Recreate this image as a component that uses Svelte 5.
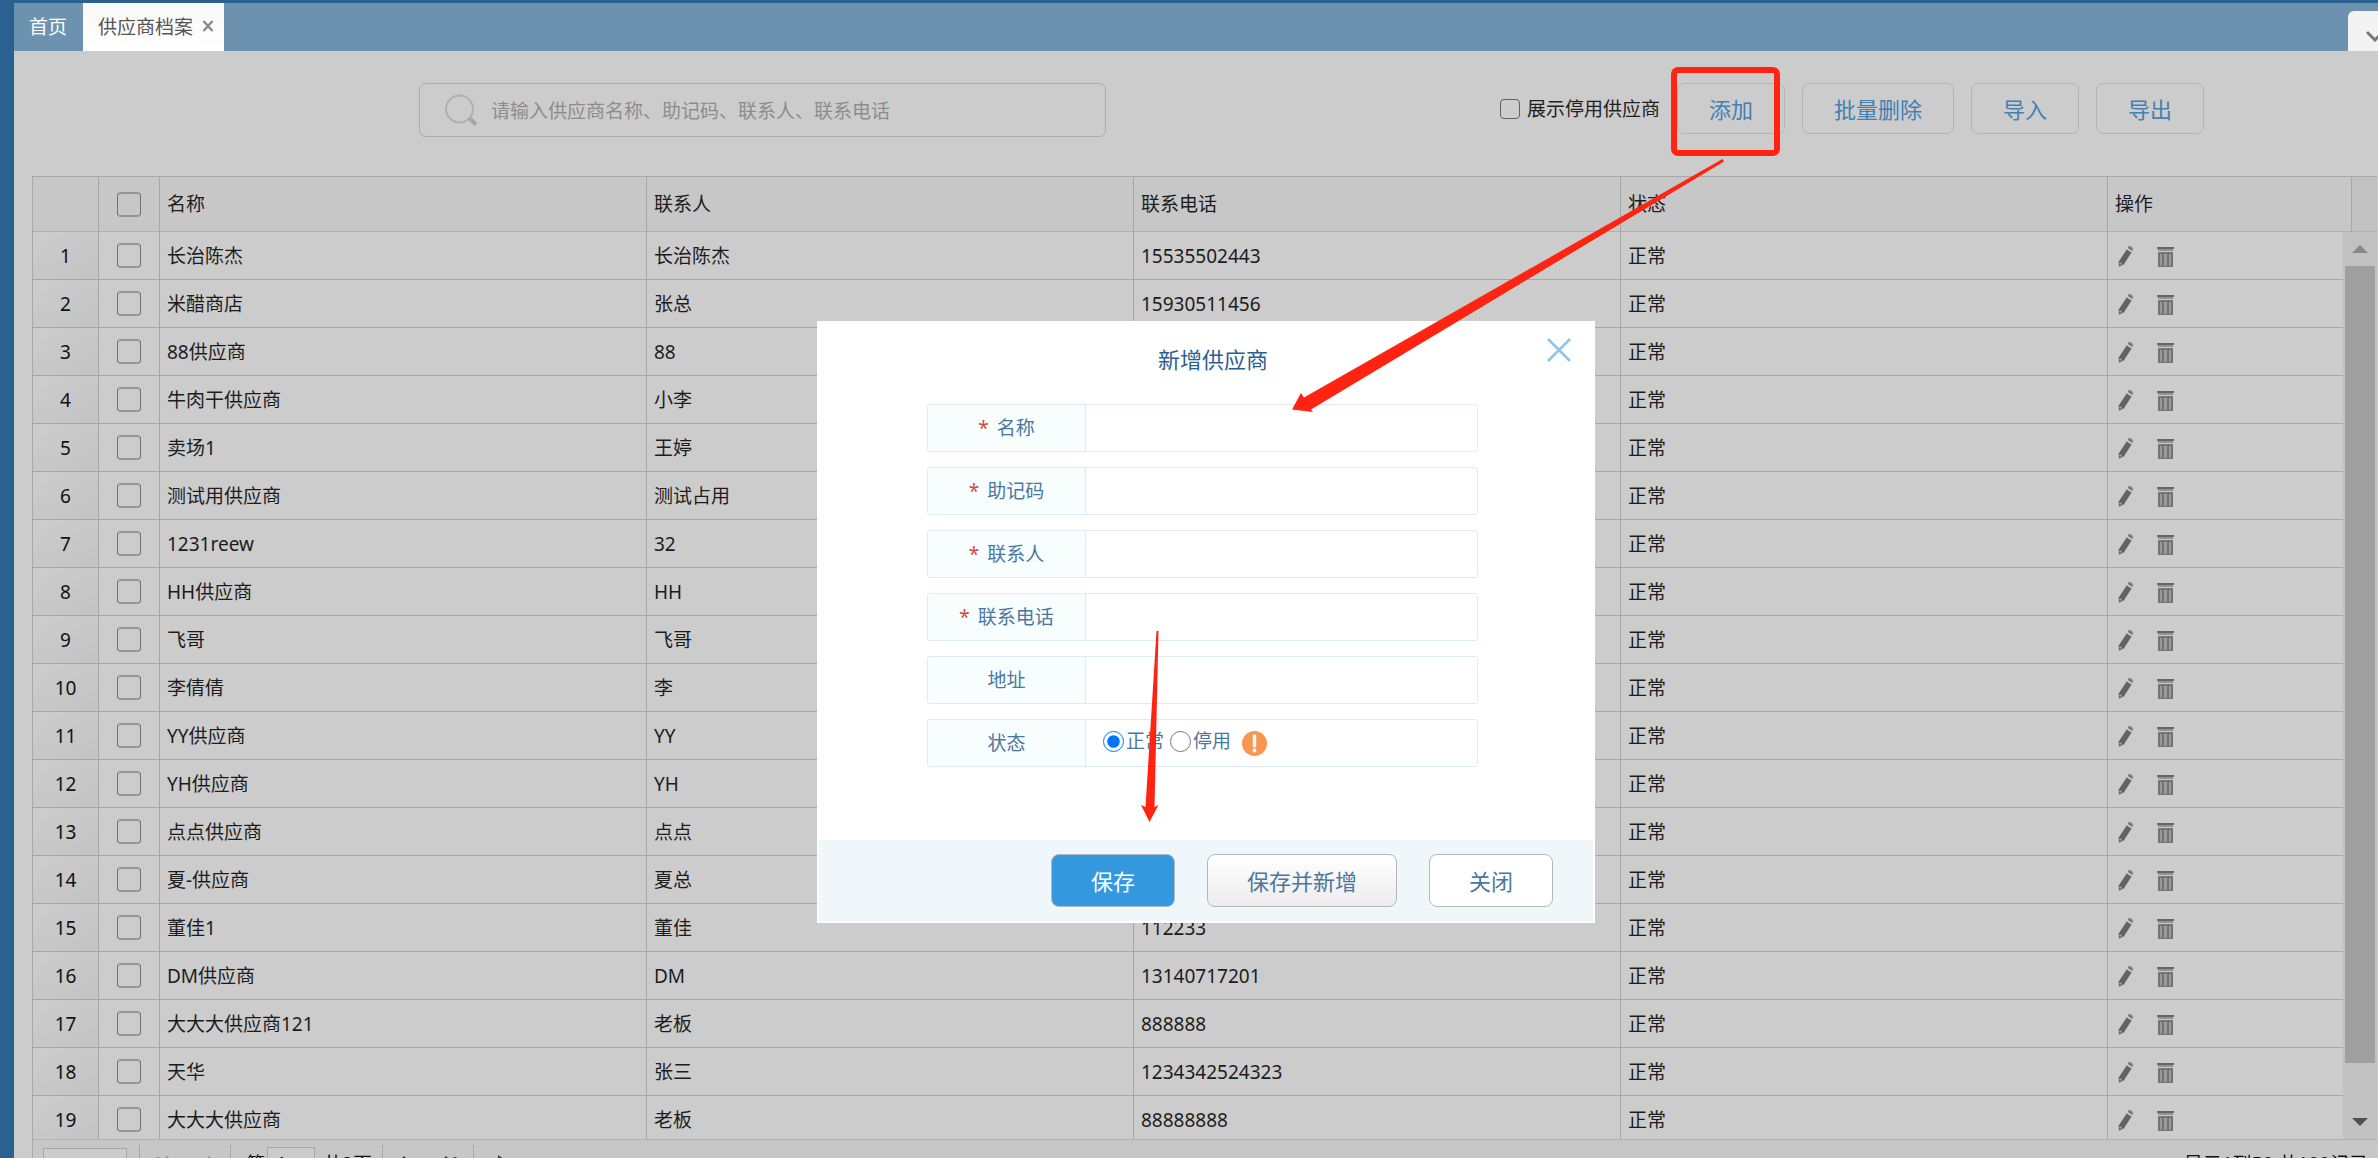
<script>
	const suppliers = [
		['长治陈杰', '长治陈杰', '15535502443'],
		['米醋商店', '张总', '15930511456'],
		['88供应商', '88', ''],
		['牛肉干供应商', '小李', ''],
		['卖场1', '王婷', ''],
		['测试用供应商', '测试占用', ''],
		['1231reew', '32', ''],
		['HH供应商', 'HH', ''],
		['飞哥', '飞哥', ''],
		['李倩倩', '李', ''],
		['YY供应商', 'YY', ''],
		['YH供应商', 'YH', ''],
		['点点供应商', '点点', ''],
		['夏-供应商', '夏总', ''],
		['董佳1', '董佳', '112233'],
		['DM供应商', 'DM', '13140717201'],
		['大大大供应商121', '老板', '888888'],
		['天华', '张三', '1234342524323'],
		['大大大供应商', '老板', '88888888']
	];

	const fields = [
		{ id: 'name', label: '名称', required: true },
		{ id: 'code', label: '助记码', required: true },
		{ id: 'contact', label: '联系人', required: true },
		{ id: 'phone', label: '联系电话', required: true },
		{ id: 'address', label: '地址', required: false }
	];

	let status = $state('normal');
</script>

<div class="shell">
	<nav class="tabs">
		<a class="tab" href="#home">首页</a>
		<div class="tab active">
			<a href="#supplier">供应商档案</a>
			<button class="tab-close" aria-label="关闭标签">
				<svg width="12" height="12" viewBox="0 0 12 12"><path d="M1.5 1L10.5 11M10.5 1L1.5 11" stroke="#888" stroke-width="2.4" /></svg>
			</button>
		</div>
		<button class="tab-more" aria-label="更多">
			<svg width="18" height="12" viewBox="0 0 18 12"><path d="M1 2L9 10L17 2" fill="none" stroke="#777" stroke-width="3" /></svg>
		</button>
	</nav>

	<header class="toolbar">
		<div class="search">
			<svg width="34" height="32" viewBox="0 0 34 32" fill="none" stroke="#b0b0b0">
				<circle cx="15.5" cy="15" r="13.5" stroke-width="2" />
				<path d="M25 24L32 30.5" stroke="#a6a6a6" stroke-width="4" />
			</svg>
			<input type="text" aria-label="搜索" placeholder="请输入供应商名称、助记码、联系人、联系电话" />
		</div>
		<div class="actions">
			<label class="show-disabled"><input type="checkbox" />展示停用供应商</label>
			<button>添加</button>
			<button>批量删除</button>
			<button>导入</button>
			<button>导出</button>
		</div>
	</header>

	<main class="grid">
		<table class="grid-head">
			<colgroup><col class="c-num" /><col class="c-check" /><col /><col /><col /><col /><col class="c-op-head" /><col class="c-fill" /></colgroup>
			<thead>
				<tr>
					<th></th>
					<th class="check"><input type="checkbox" aria-label="全选" /></th>
					<th>名称</th>
					<th>联系人</th>
					<th>联系电话</th>
					<th>状态</th>
					<th>操作</th>
					<th class="fill"></th>
				</tr>
			</thead>
		</table>
		<div class="grid-body">
			<div class="rows">
				<table>
					<colgroup><col class="c-num" /><col class="c-check" /><col /><col /><col /><col /><col class="c-op" /></colgroup>
					<tbody>
						{#each suppliers as [name, contact, phone], i}
							<tr>
								<td class="num">{i + 1}</td>
								<td class="check"><input type="checkbox" aria-label="选择 {name}" /></td>
								<td>{name}</td>
								<td>{contact}</td>
								<td>{phone}</td>
								<td>正常</td>
								<td class="ops">
									<div>
										<button aria-label="编辑">
											<svg width="16" height="22" viewBox="0 0 16 22">
												<path d="M8.6 4.5L13.6 7.4L5.8 19.4L1 21.8L.6 16.8Z" fill="#626262" />
												<path d="M9.8 3L11 .6L15.2 3L14.2 6.2Z" fill="#7c7c7c" />
												<path d="M1.6 18L4 19.4" stroke="#b5b5b5" stroke-width="1.2" />
											</svg>
										</button>
										<button aria-label="删除">
											<svg width="17" height="22" viewBox="0 0 17 22">
												<path d="M0 2H17V4H0Z" fill="#666" />
												<path d="M1 4H16V6H1Z" fill="#929292" />
												<path d="M1 7H16V22H1Z" fill="#9b9b9b" />
												<path d="M2 22V8H15V22M6 8V22M11 8V22" fill="none" stroke="#6a6a6a" stroke-width="1.6" />
												<path d="M1 21.3H16" stroke="#777" stroke-width="1.4" />
											</svg>
										</button>
									</div>
								</td>
							</tr>
						{/each}
					</tbody>
				</table>
			</div>
			<div class="scrollbar">
				<span class="arrow up"></span>
				<div class="track"><div class="thumb"></div></div>
				<span class="arrow down"></span>
			</div>
		</div>
		<footer class="pager">
			<select aria-label="每页条数"><option></option></select>
			<div class="nav-pair">
				<button aria-label="首页"><svg width="14" height="16" viewBox="0 0 14 16" stroke="#909090" fill="none" stroke-width="3"><path d="M2 1V15M12 1L6 8L12 15" /></svg></button>
				<button aria-label="上一页"><svg width="14" height="16" viewBox="0 0 14 16" stroke="#909090" fill="none" stroke-width="3"><path d="M10 1L4 8L10 15" /></svg></button>
			</div>
			<label class="page-no">第<input type="text" value="1" />共2页</label>
			<div class="nav-pair">
				<button aria-label="下一页"><svg width="14" height="16" viewBox="0 0 14 16" stroke="#444" fill="none" stroke-width="3"><path d="M4 1L10 8L4 15" /></svg></button>
				<button aria-label="末页"><svg width="14" height="16" viewBox="0 0 14 16" stroke="#444" fill="none" stroke-width="3"><path d="M2 1L8 8L2 15M12 1V15" /></svg></button>
			</div>
			<button class="reload" aria-label="刷新"><svg width="20" height="20" viewBox="0 0 20 20"><path d="M9 4A7 7 0 1 0 17 11" fill="none" stroke="#4a4242" stroke-width="3" /><path d="M8 0L14 4L8 8Z" fill="#4a4242" /></svg></button>
			<span class="total">显示1到50,共100记录</span>
		</footer>
	</main>
</div>

<div class="overlay">
	<form class="dialog" onsubmit={(e) => e.preventDefault()}>
		<div class="title">
			<h2>新增供应商</h2>
			<button type="button" class="close" aria-label="关闭">
				<svg width="24" height="24" viewBox="0 0 24 24"><path d="M1 1L23 23M23 1L1 23" stroke="#8ec6ec" stroke-width="2.6" /></svg>
			</button>
		</div>
		<div class="fields">
			{#each fields as field}
				<div class="field">
					<label for={field.id}>{#if field.required}<i>*</i>{/if}{field.label}</label>
					<input id={field.id} type="text" />
				</div>
			{/each}
			<div class="field">
				<span class="label">状态</span>
				<div class="radios">
					<label><input type="radio" value="normal" bind:group={status} />正常</label>
					<label><input type="radio" value="disabled" bind:group={status} />停用</label>
					<svg width="25" height="25" viewBox="0 0 25 25"><circle cx="12.5" cy="12.5" r="12.5" fill="#f79752" /><path d="M12.5 5V15" stroke="#fff" stroke-width="3.4" stroke-linecap="round" /><circle cx="12.5" cy="19.5" r="1.9" fill="#fff" /></svg>
				</div>
			</div>
		</div>
		<div class="buttons">
			<button class="primary">保存</button>
			<button class="shaded">保存并新增</button>
			<button type="button">关闭</button>
		</div>
	</form>
</div>

<!-- step marks: button frame and the two arrows -->
<svg class="marks">
	<rect x="1674" y="70" width="103" height="83" rx="4" fill="none" stroke="#ff2312" stroke-width="6" />
	<path d="M1722.500 159L1724 161.500L1311 409.500L1313 412L1292 409.500L1301 393L1304 397.500Z" fill="#ff2312" />
	<path d="M1156.500 631L1158.500 631L1154.500 807L1158.500 805L1149.500 822L1141 805L1145.500 807Z" fill="#ff2312" />
</svg>

<style>
	:global(body) {
		overflow: hidden;
		font-family: "Noto Sans", "Noto Sans CJK SC", sans-serif;
		font-size: 19px;
		line-height: 28px;
	}

	* {
		box-sizing: border-box;
	}

	button,
	input,
	select {
		font: inherit;
		margin: 0;
	}

	button {
		padding: 0;
		border: 0;
		background: none;
		cursor: pointer;
	}

	svg {
		display: block;
	}

	a {
		color: inherit;
		text-decoration: none;
	}

	.shell {
		display: flex;
		flex-direction: column;
		height: 100vh;
		overflow: hidden;
		border-top: 3px solid #2a6191;
		border-left: 14px solid #2a6191;
		background: #ccc;
	}

	/* tabs */
	.tabs {
		display: flex;
		flex: none;
		height: 48px;
		background: #6d92b0;
	}

	.tab {
		display: flex;
		align-items: center;
		padding: 0 16px 0 15px;
		color: #fff;
	}

	.tab.active {
		gap: 9px;
		padding-right: 10px;
		color: #555;
		background: linear-gradient(#f8f8f8, #fff);
	}

	.tab-close {
		padding-bottom: 3px;
	}

	.tab-more {
		width: 30px;
		margin: 8px 0 0 auto;
		padding: 10px 0 0 18px;
		overflow: hidden;
		border-radius: 6px 0 0 0;
		background: #f3f3f3;
	}

	/* toolbar */
	.toolbar {
		display: flex;
		flex: none;
		justify-content: space-between;
		align-items: flex-start;
		height: 125px;
		padding: 32px 174px 0 405px;
	}

	.search {
		display: flex;
		flex: 0 1 687px;
		align-items: center;
		gap: 13px;
		height: 54px;
		padding-left: 24px;
		border: 1px solid #adadad;
		border-radius: 7px;
	}

	.search input {
		flex: 1;
		padding: 2px 0 0;
		border: 0;
		outline: 0;
		background: none;
	}

	.search input::placeholder {
		color: #8c8c8c;
	}

	.actions {
		display: flex;
		align-items: center;
		gap: 17px;
	}

	.actions button {
		height: 51px;
		padding: 0 31px;
		border: 1px solid #b4b4b4;
		border-radius: 7px;
		color: #4380b3;
		font-size: 22px;
	}

	.show-disabled {
		display: flex;
		align-items: center;
		gap: 7px;
		color: #222;
	}

	input[type="checkbox"] {
		display: block;
		width: 24px;
		height: 25px;
		appearance: none;
		border: 1px solid #707070;
		border-width: 2px 1px;
		border-color: #959595 #707070;
		border-radius: 4px;
	}

	.show-disabled input {
		width: 20px;
		height: 20px;
		border: 1px solid #626262;
	}

	/* table */
	.grid {
		display: flex;
		flex: 1;
		flex-direction: column;
		min-height: 0;
		margin: 0 1px 0 18px;
		border-top: 1px solid #a8a8a8;
		border-left: 1px solid #a8a8a8;
	}

	table {
		width: 100%;
		table-layout: fixed;
		border-collapse: separate;
		border-spacing: 0;
	}

	.c-num {
		width: 66px;
	}

	.c-check {
		width: 61px;
	}

	.c-op-head {
		width: 244px;
	}

	.c-fill {
		width: 25px;
	}

	.c-op {
		width: 235px;
	}

	th,
	td {
		height: 48px;
		padding: 0 7px;
		border-right: 1px solid #a6a6a6;
		border-bottom: 1px solid #a6a6a6;
		color: #1c1c1c;
		font-weight: normal;
		text-align: left;
		white-space: nowrap;
	}

	th {
		height: 55px;
		border-bottom-color: #b0b0b0;
		background: #c7c7c7;
	}

	th.fill {
		border-right: 0;
		background: #c1c1c1;
	}

	td.num {
		color: #111;
		background: linear-gradient(150deg, #cdcdcd, #c3c3c3);
		text-align: center;
	}

	.check input {
		margin: 0 auto;
	}

	td.ops {
		padding-left: 10px;
		border-right: 0;
	}

	.ops div {
		display: flex;
		gap: 23px;
	}

	.grid-head {
		flex: none;
	}

	.grid-body {
		display: flex;
		flex: 1;
		min-height: 0;
	}

	.rows {
		flex: 1;
		overflow: hidden;
	}

	.scrollbar {
		display: flex;
		flex-direction: column;
		flex: none;
		width: 34px;
		background: #c1c1c1;
	}

	.track {
		flex: 1;
		padding: 0 2px;
	}

	.thumb {
		height: 95%;
		background: #9f9f9f;
	}

	.arrow {
		display: flex;
		flex: none;
		align-items: center;
		justify-content: center;
		height: 34px;
	}

	.arrow::before {
		content: "";
		border: 8px solid transparent;
	}

	.up::before {
		border-top: 0;
		border-bottom-color: #888;
	}

	.down::before {
		border-bottom: 0;
		border-top-color: #505050;
	}

	/* pager hangs below the fold, only its top edge shows */
	.pager {
		display: flex;
		flex: none;
		height: 48px;
		margin-bottom: -29px;
		padding: 5px 9px 0 10px;
		border-top: 1px solid #b0b0b0;
		background: #c7c7c7;
		color: #111;
	}

	.pager select {
		width: 84px;
		height: 36px;
		margin: 3px 12px 0 0;
		appearance: none;
		border: 1px solid #a6a6a6;
		border-radius: 0;
		background: #cbcbcb;
	}

	.nav-pair {
		display: flex;
		gap: 30px;
		align-items: flex-start;
		width: 91px;
		padding: 11px 0 0 16px;
		border-left: 1px solid #a6a6a6;
	}

	.page-no {
		display: flex;
		width: 152px;
		padding: 5px 0 0 15px;
		border-left: 1px solid #a6a6a6;
	}

	.page-no input {
		width: 48px;
		height: 34px;
		margin: -3px 8px 0 2px;
		padding: 0 8px;
		border: 1px solid #a6a6a6;
		background: #cbcbcb;
	}

	.reload {
		display: flex;
		padding: 10px 0 0 16px;
		border-left: 1px solid #a6a6a6;
	}

	.total {
		margin-left: auto;
		padding-top: 5px;
	}

	/* dialog */
	.overlay {
		position: fixed;
		inset: 0 0 0 34px;
		display: flex;
		justify-content: center;
		align-items: flex-start;
		padding-top: 321px;
	}

	.dialog {
		width: 778px;
		padding: 0 2px 2px;
		background: #fff;
	}

	.title {
		display: flex;
		justify-content: space-between;
		padding: 17px 22px 0 339px;
	}

	h2 {
		margin: 5px 0 0;
		color: #2b5f93;
		font-size: 22px;
		font-weight: normal;
		line-height: 32px;
	}

	.close {
		height: 24px;
	}

	.fields {
		display: flex;
		flex-direction: column;
		gap: 15px;
		padding: 29px 115px 73px 108px;
	}

	.field {
		display: flex;
		height: 48px;
		border: 1px solid #ddebf6;
		border-radius: 3px;
		color: #4b779f;
	}

	.field > label,
	.label {
		display: flex;
		flex: none;
		align-items: center;
		justify-content: center;
		width: 158px;
		border-right: 1px solid #ddebf6;
		background: #f8fefe;
	}

	i {
		margin-right: 8px;
		color: #cf4a3f;
		font-style: normal;
	}

	.field > input {
		flex: 1;
		min-width: 0;
		padding: 0 12px;
		border: 0;
		outline: 0;
		background: none;
	}

	.radios {
		display: flex;
		align-items: center;
		gap: 6px;
		padding: 0 0 4px 17px;
	}

	.radios label {
		display: flex;
		align-items: center;
		gap: 2px;
	}

	.radios input {
		width: 21px;
		height: 21px;
		accent-color: #0075ff;
	}

	.radios svg {
		margin: 4px 0 0 5px;
	}

	.buttons {
		display: flex;
		justify-content: flex-end;
		gap: 32px;
		padding: 14px 40px;
		background: #f0f7fb;
	}

	.buttons button {
		height: 53px;
		padding: 0 39px;
		border: 1px solid #b5b8ba;
		border-radius: 8px;
		background: #fff;
		color: #4b779f;
		font-size: 22px;
	}

	.buttons .shaded {
		background: linear-gradient(#fff, #ececec);
	}

	.buttons .primary {
		background: #3498de;
		color: #fff;
	}

	.marks {
		position: fixed;
		inset: 0;
		width: 100%;
		height: 100%;
		pointer-events: none;
	}
</style>
